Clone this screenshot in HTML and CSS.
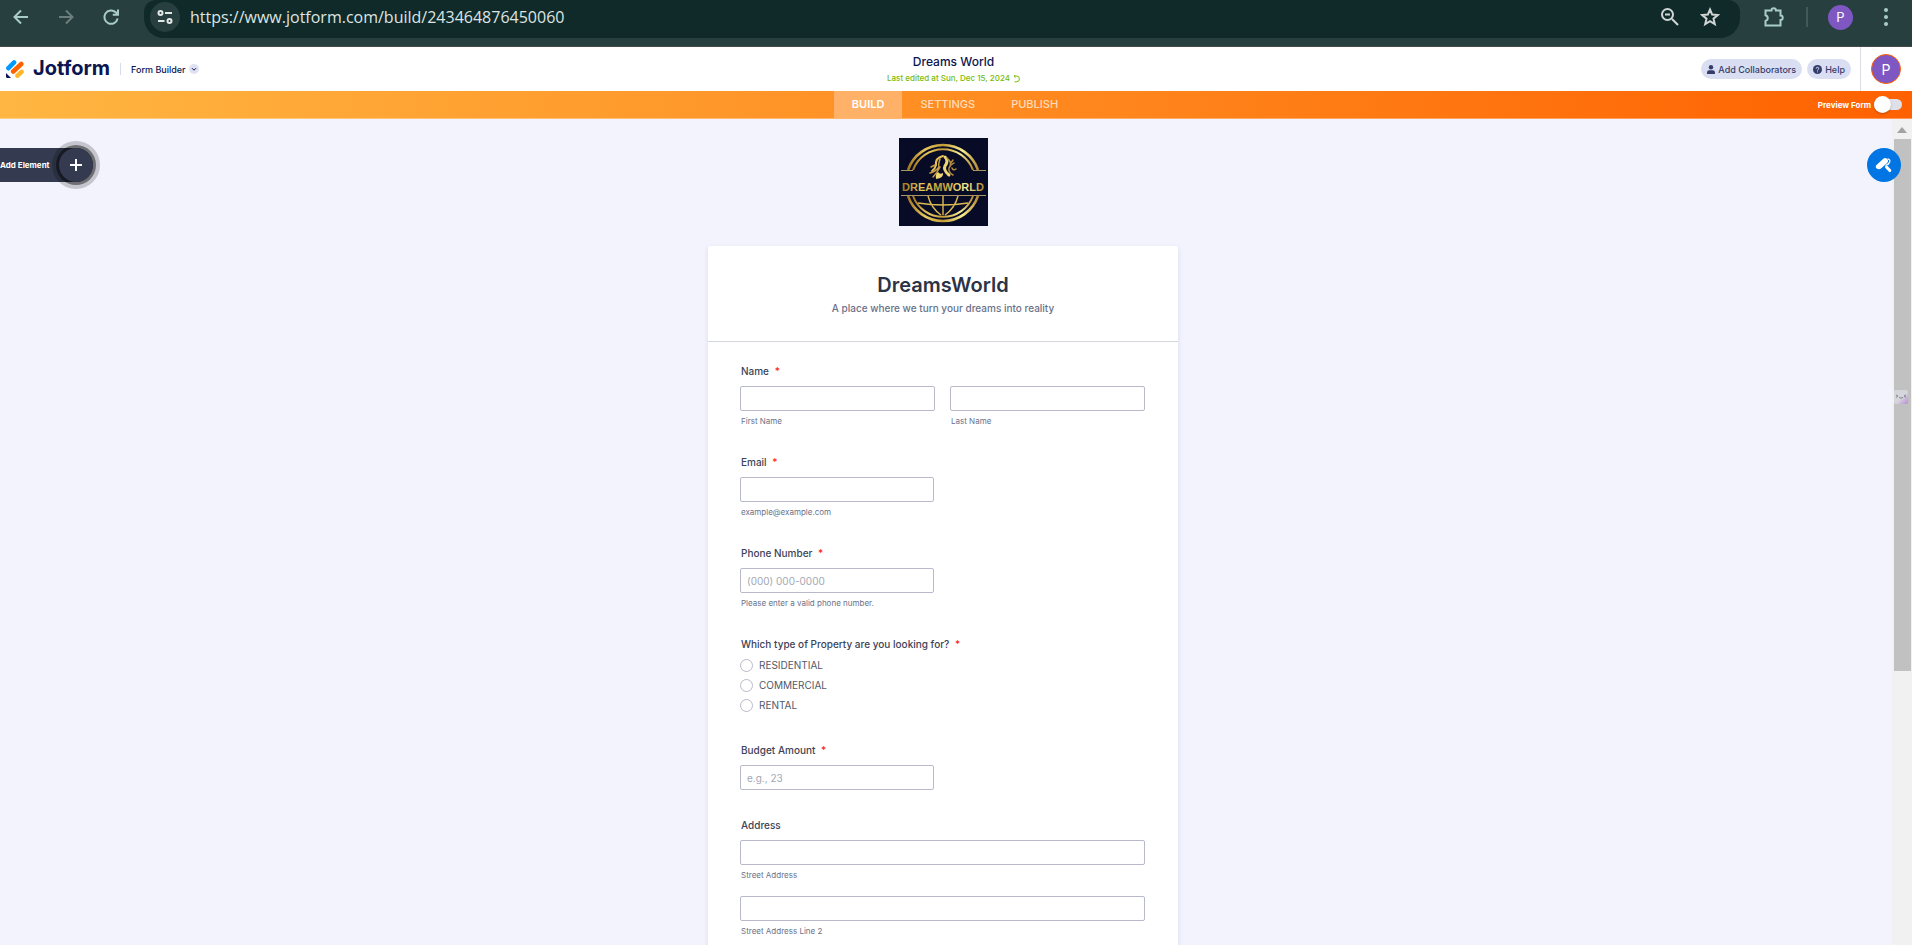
FILE: index.html
```html
<!DOCTYPE html>
<html lang="en">
<head>
<meta charset="utf-8">
<title>Dreams World - Form Builder</title>
<link rel="stylesheet" href="styles.css">
</head>
<body>
<div class="browser">
  <div class="browser-nav">
    <button class="tool" aria-label="Back"><svg width="18" height="18" viewBox="0 0 18 18"><path d="M16 9H3M9 2.500 2.500 9 9 15.500"/></svg></button>
    <button class="tool tool-off" aria-label="Forward"><svg width="18" height="18" viewBox="0 0 18 18"><path d="M2 9h13M9 2.500 15.500 9 9 15.500"/></svg></button>
    <button class="tool" aria-label="Reload"><svg width="18" height="18" viewBox="0 0 18 18"><path d="M15.600 10.500A6.700 6.700 0 1 1 13.700 4.300L15.500 6M16 1.500V6.700H10.800"/></svg></button>
  </div>
  <div class="omnibox">
    <button class="site-info" aria-label="Site information"><svg width="16" height="16" viewBox="0 0 16 16"><circle cx="3.500" cy="4" r="2"/><path d="M8 4h7M1 12h6.500"/><circle cx="12.500" cy="12" r="2"/></svg></button>
    <input class="url" type="text" aria-label="Address bar" value="https://www.jotform.com/build/243464876450060">
    <button class="tool" aria-label="Zoom"><svg width="20" height="20" viewBox="0 0 20 20"><circle cx="7.500" cy="7.500" r="5.500"/><path d="M12 12l6 6M5 7.500h5"/></svg></button>
    <button class="tool" aria-label="Bookmark"><svg width="20" height="20" viewBox="0 0 20 20"><path d="M10 2.500l2.200 5.100 5.500.5-4.200 3.600 1.300 5.400L10 14.200l-4.800 2.900 1.300-5.400L2.300 8.100l5.500-.5z"/></svg></button>
  </div>
  <div class="browser-end">
    <button class="tool tool-soft" aria-label="Extensions"><svg width="22" height="22" viewBox="0 0 22 22"><path d="M2.500 4.500H8.500a2.200 2.200 0 0 1 4.400 0H17.500V9.500a2.200 2.200 0 0 1 0 4.400V19.500H2.500V15a3 3 0 0 0 0-5.800z"/></svg></button>
    <span class="browser-rule"></span>
    <button class="profile" aria-label="Profile">P</button>
    <button class="tool tool-soft" aria-label="Menu"><svg width="6" height="20" viewBox="0 0 6 20"><g class="solid"><circle cx="3" cy="3" r="2"/><circle cx="3" cy="10" r="2"/><circle cx="3" cy="17" r="2"/></g></svg></button>
  </div>
</div>

<header class="header">
  <div class="header-left">
    <a class="brand" href="#">
      <svg width="18" height="18" viewBox="0 0 18 18" aria-hidden="true"><g fill="none" stroke-width="4.600" stroke-linecap="round"><path stroke="#0099ff" d="M2.400 8.200 8 2.500"/><path stroke="#ff6100" d="M7.200 11.500 15.300 4"/><path stroke="#ffb629" d="M11.500 15.600l4-3.700"/></g><path fill="#0a1551" d="M0 13v3.800c0 .7.500 1.200 1.200 1.200H5z"/></svg>
      <span class="brand-name">Jotform</span>
    </a>
    <button class="product">Form Builder <span class="chev"><svg width="10" height="10" viewBox="0 0 10 10"><path d="M3 4.200l2 2 2-2"/></svg></span></button>
  </div>
  <div class="header-mid">
    <h1 class="doc-title">Dreams World</h1>
    <a class="edited" href="#">Last edited at Sun, Dec 15, 2024 <svg width="7" height="8" viewBox="0 0 7 8"><path d="M1 1h2.500a2.700 2.700 0 0 1 0 5.800H1.500M2.500 0 1 1.300l1.500 1.400"/></svg></a>
  </div>
  <div class="header-right">
    <button class="pill"><svg width="8" height="9" viewBox="0 0 8 9"><circle cx="4" cy="2.200" r="2.200"/><path d="M0 9V7.500Q0 5.200 2.300 5.200H5.700Q8 5.200 8 7.500V9z"/></svg>Add Collaborators</button>
    <button class="pill"><svg width="9" height="9" viewBox="0 0 9 9"><circle cx="4.500" cy="4.500" r="4.500"/><path class="mark" d="M3.200 3.600a1.300 1.300 0 1 1 1.900 1.100q-.6.300-.6.800M4.500 6.500v.8"/></svg>Help</button>
    <div class="account"><button class="avatar" aria-label="Account">P</button></div>
  </div>
</header>

<nav class="nav">
  <div class="tabs">
    <a class="tab tab-on" href="#">BUILD</a>
    <a class="tab" href="#">SETTINGS</a>
    <a class="tab" href="#">PUBLISH</a>
  </div>
  <label class="preview">Preview Form <input class="switch" type="checkbox"></label>
</nav>

<div class="workspace">
  <button class="add-element">Add Element <span class="plus"><svg width="12" height="12" viewBox="0 0 12 12"><path d="M6 0v12M0 6h12"/></svg></span></button>
  <main class="stage">
    <svg class="logo" width="89" height="88" viewBox="0 0 89 88" role="img" aria-label="Dreamworld">
      <defs>
        <linearGradient id="gold" x1="0" y1="0" x2="1" y2="0"><stop offset="0" stop-color="#a8771f"/><stop offset=".25" stop-color="#e6c860"/><stop offset=".5" stop-color="#c49a35"/><stop offset=".78" stop-color="#f6ee92"/><stop offset="1" stop-color="#b48a34"/></linearGradient>
      </defs>
      <rect width="89" height="88" fill="#080b25"/>
      <g fill="none" stroke="#dbb950">
        <path stroke="url(#gold)" stroke-width="2.500" d="M9 32A37 37 0 0 1 79 32M9 58A37 37 0 0 0 79 58"/>
        <path stroke="url(#gold)" stroke-width="2" d="M14 32A32 32 0 0 1 74 32M14 58A32 32 0 0 0 74 58"/>
        <path stroke="#a89663" stroke-width="1" d="M2 32.500H14M74 32.500H87M2 57.500H87"/>
        <path stroke-width="1.400" d="M44 58V77M29 58Q32 70 42 77M59 58Q56 70 46 77M19 65Q44 69 69 65"/>
      </g>
      <g fill="none" stroke-linecap="round">
        <path stroke="#e3c05a" stroke-width="2" d="M44 18Q36 20 37 27Q36 31 33 33"/>
        <path stroke="#c79d45" stroke-width="1.500" d="M41 21Q39 27 40 29Q36 34 31 35M41 29Q38 35 34 39M36 27L32 29"/>
        <path stroke="#efd675" stroke-width="3" d="M46 19Q50 23 46 28Q44 32 50 37"/>
        <path stroke="#b58b3c" stroke-width="1.500" d="M48 20Q54 25 50 30Q49 34 54 37M53 30Q54 33 57 31M50 22l2 3 2-3M52 27l3-2"/>
      </g>
      <path fill="#efd675" d="M37 41Q36 36 39 34Q41 37 44 35Q45 40 37 41Z"/>
      <text class="logo-text" x="44" y="53" text-anchor="middle" fill="url(#gold)">DREAMWORLD</text>
    </svg>
    <form class="card">
      <div class="card-head">
        <h2 class="form-title">DreamsWorld</h2>
        <p class="form-sub">A place where we turn your dreams into reality</p>
      </div>
      <div class="fields">
        <fieldset class="field">
          <legend class="label">Name <span class="req">*</span></legend>
          <div class="pair">
            <div><input class="box" id="first" type="text"><label class="hint" for="first">First Name</label></div>
            <div><input class="box" id="last" type="text"><label class="hint" for="last">Last Name</label></div>
          </div>
        </fieldset>
        <div class="field">
          <label class="label" for="email">Email <span class="req">*</span></label>
          <input class="box box-half" id="email" type="email" aria-describedby="email-hint">
          <span class="hint" id="email-hint">example@example.com</span>
        </div>
        <div class="field">
          <label class="label" for="phone">Phone Number <span class="req">*</span></label>
          <input class="box box-half" id="phone" type="tel" placeholder="(000) 000-0000" aria-describedby="phone-hint">
          <span class="hint" id="phone-hint">Please enter a valid phone number.</span>
        </div>
        <fieldset class="field">
          <legend class="label label-tight">Which type of Property are you looking for? <span class="req">*</span></legend>
          <label class="option"><input class="radio" type="radio" name="property">RESIDENTIAL</label>
          <label class="option"><input class="radio" type="radio" name="property">COMMERCIAL</label>
          <label class="option"><input class="radio" type="radio" name="property">RENTAL</label>
        </fieldset>
        <div class="field">
          <label class="label" for="budget">Budget Amount <span class="req">*</span></label>
          <input class="box box-half" id="budget" type="text" placeholder="e.g., 23">
        </div>
        <fieldset class="field">
          <legend class="label">Address</legend>
          <div class="stack">
            <div><input class="box" id="street" type="text"><label class="hint" for="street">Street Address</label></div>
            <div><input class="box" id="street2" type="text"><label class="hint" for="street2">Street Address Line 2</label></div>
          </div>
        </fieldset>
      </div>
    </form>
  </main>
  <div class="scrollbar" aria-hidden="true">
    <svg class="scroll-up" width="10" height="6" viewBox="0 0 10 6"><path d="M0 6 5 0l5 6z"/></svg>
    <div class="thumb"></div>
  </div>
  <button class="designer" aria-label="Form designer"><svg width="18" height="18" viewBox="0 0 18 18"><path fill="#fff" d="M1 9.500 8 3q2-2 4-.2t.4 3.900L6 12.500q-2 1.400-4 .3T1 9.500z"/><path fill="none" stroke="#fff" stroke-width="1.300" d="M12.500 2.800q3 .7 2.200 3.200T10.500 9.500"/><path fill="none" stroke="#fff" stroke-width="3" stroke-linecap="round" d="M11.500 11l3.300 3.600"/></svg></button>
  <button class="helper" aria-label="Assistant"><svg width="14" height="14" viewBox="0 0 14 14"><path d="M2 5l2 1-2 1.500M12 5l-2 1 2 1.500M5 7.500q2 1.200 4 0"/></svg></button>
</div>
</body>
</html>
```

FILE: styles.css
```css
* { box-sizing: border-box; }
body {
  margin: 0;
  height: 100vh;
  display: flex;
  flex-direction: column;
  overflow: hidden;
  font-family: Inter, "Liberation Sans", sans-serif;
  color: #2c3345;
  background: #f3f3fe;
}
button, input { font: inherit; color: inherit; }
button { border: 0; padding: 0; background: none; }
a { color: inherit; text-decoration: none; }
svg { display: block; flex: none; }
h1, h2, p { margin: 0; }
fieldset { border: 0; margin: 0; padding: 0; min-width: 0; }

/* Browser toolbar */
.browser {
  flex: none;
  height: 47px;
  display: flex;
  align-items: flex-start;
  background: #27403f;
  border-bottom: 1px solid #454b4a;
}
.browser-nav { display: flex; gap: 27px; padding: 8px 24px 0 12px; }
.tool { color: #d0d6d5; }
.tool svg { fill: none; stroke: currentColor; stroke-width: 2; }
.tool .solid { fill: currentColor; stroke: none; }
.browser-nav .tool, .tool-soft { color: #a9cbca; }
.browser-nav .tool-off { color: #6c7d7c; }
.omnibox {
  flex: 1;
  height: 38px;
  display: flex;
  align-items: center;
  gap: 20px;
  padding: 0 20px 4px 6px;
  background: #102a29;
  border-radius: 12px 12px 20px 20px;
}
.site-info {
  width: 30px;
  height: 30px;
  display: grid;
  place-items: center;
  border-radius: 50%;
  background: #27403f;
  color: #e3e8e7;
}
.site-info svg { fill: none; stroke: currentColor; stroke-width: 2; }
.url {
  flex: 1;
  min-width: 0;
  margin-left: -10px;
  padding: 0;
  border: 0;
  background: none;
  color: #dde4e3;
  font-family: "Open Sans", "Noto Sans", sans-serif;
  font-size: 16px;
}
.browser-end { display: flex; align-items: center; height: 34px; padding: 0 23px 0 23px; }
.browser-rule { width: 2px; height: 20px; margin: 0 20px 0 21px; background: #415a59; }
.profile { width: 25px; height: 25px; margin-right: 30px; border-radius: 50%; background: #7e57c2; color: #fff; font-size: 13px; }

/* App header */
.header {
  flex: none;
  height: 44px;
  display: grid;
  grid-template-columns: 1fr auto 1fr;
  align-items: center;
  background: #fff;
  color: #0a1551;
}
.header-left { display: flex; align-items: center; padding-left: 6px; }
.brand { display: flex; align-items: center; gap: 9px; }
.brand-name { font-size: 20px; font-weight: 700; line-height: 22px; padding-bottom: 2px; }
.product {
  display: flex;
  align-items: center;
  gap: 3px;
  height: 12px;
  margin-left: 10px;
  padding-left: 10px;
  border-left: 1px solid #d8daee;
  font-size: 9px;
  font-weight: 500;
}
.chev { border-radius: 50%; background: #dfe2f3; }
.chev svg { fill: none; stroke: #0a1551; }
.header-mid { display: flex; flex-direction: column; align-items: center; gap: 3px; padding-right: 5px; }
.doc-title { font-size: 12px; font-weight: 500; line-height: 16px; }
.edited { display: flex; align-items: center; gap: 3px; font-size: 8px; font-weight: 500; line-height: 11px; color: #78bb07; }
.edited svg { fill: none; stroke: currentColor; }
.header-right { display: flex; justify-content: flex-end; align-items: center; align-self: stretch; gap: 5px; }
.pill {
  display: flex;
  align-items: center;
  gap: 3px;
  height: 20px;
  padding: 0 6px;
  border-radius: 10px;
  background: #dadef3;
  color: #343c6a;
  font-size: 9px;
  font-weight: 500;
}
.pill svg { fill: currentColor; }
.pill .mark { fill: none; stroke: #dadef3; }
.account { display: flex; align-items: center; align-self: stretch; margin-left: 4px; padding: 0 11px 0 10px; border-left: 1px solid #dcdde3; }
.avatar { width: 30px; height: 30px; border: 1px solid #ff6100; border-radius: 50%; background: #7e57c2; color: #fff; font-size: 14px; }

/* Builder tabs */
.nav {
  flex: none;
  height: 28px;
  display: grid;
  grid-template-columns: 1fr auto 1fr;
  background: linear-gradient(90deg, #ffb642, #ff8d22 50%, #ff6100);
  border-bottom: 1px solid #ffffff55;
  color: #fff;
}
.tabs { grid-column: 2; display: flex; padding-right: 2px; }
.tab { display: flex; align-items: center; padding: 0 18px 2px; font-size: 11px; font-weight: 500; color: #ffdcb8; }
.tab-on { background: #ffb168; color: #fff; font-weight: 600; }
.preview { display: flex; justify-content: flex-end; align-items: center; gap: 3px; padding-right: 10px; font-size: 8px; font-weight: 700; }
.switch { appearance: none; position: relative; width: 28px; height: 11px; margin: 0; border-radius: 6px; background: #dfe0e8; }
.switch::before { content: ""; position: absolute; left: 0; top: -3px; width: 17px; height: 17px; border-radius: 50%; background: #fff; box-shadow: 0 1px 2px #0004; }

/* Workspace */
.workspace { flex: 1; min-height: 0; position: relative; display: flex; }
.stage { flex: 1; min-width: 0; overflow: hidden; display: flex; flex-direction: column; align-items: center; padding-top: 19px; padding-right: 6px; }
.logo { margin-bottom: 20px; }
.logo-text { font-family: "Liberation Sans", sans-serif; font-size: 11px; font-weight: 700; }
.card { width: 100%; max-width: 470px; flex: none; background: #fff; border-radius: 2px; box-shadow: 0 2px 5px #54547d26; }
.card-head { padding: 24px 32px; border-bottom: 1px solid #d5d6e0; text-align: center; }
.form-title { font-size: 20px; font-weight: 600; line-height: 30px; }
.form-sub { font-size: 10px; font-weight: 500; line-height: 17px; color: #6a718a; }
.fields { display: flex; flex-direction: column; gap: 28px; padding: 22px 33px 40px 32px; }
.label { display: block; margin-bottom: 8px; padding: 0 0 0 1px; font-size: 10px; font-weight: 500; line-height: 14px; color: #3d4357; }
.label-tight { margin-bottom: 4px; }
.req { margin-left: 3px; color: #ff1d1d; }
.box { display: block; width: 100%; height: 25px; padding: 0 6px; border: 1px solid #b8bacb; border-radius: 2px; background: #fff; font-size: 10px; }
.box-half { width: 48%; }
.box::placeholder { color: #a3a8b4; opacity: 1; }
.hint { display: block; margin-top: 4px; padding-left: 1px; font-size: 8px; line-height: 12px; color: #69728a; }
.pair { display: grid; grid-template-columns: 1fr 1fr; gap: 15px; }
.stack { display: grid; gap: 15px; }
.option { display: flex; align-items: center; gap: 6px; height: 20px; font-size: 10px; line-height: 16px; color: #535968; }
.radio { appearance: none; width: 13px; height: 13px; margin: 0; border: 1px solid #b8bacb; border-radius: 50%; background: #fff; }

/* Floating controls */
.add-element {
  position: absolute;
  left: 0;
  top: 29px;
  height: 34px;
  display: flex;
  align-items: center;
  gap: 9px;
  border-radius: 0 17px 17px 0;
  background: #343a4f;
  color: #fff;
  font-size: 8px;
  font-weight: 700;
}
.plus { width: 34px; height: 34px; display: grid; place-items: center; border-radius: 50%; background: #343a4f; box-shadow: 0 0 0 3px #00000070, 0 0 0 7px #00000030; }
.plus svg { fill: none; stroke: #fff; stroke-width: 2; }
.designer { position: absolute; right: 11px; top: 29px; width: 34px; height: 34px; display: grid; place-items: center; border-radius: 50%; background: #0075e3; }
.helper { position: absolute; right: 4px; top: 271px; border-radius: 2px; background: linear-gradient(135deg, #d5d6dc 55%, #b98ad8); }
.helper svg { fill: none; stroke: #85858f; }
.scrollbar { flex: none; width: 20px; display: flex; flex-direction: column; align-items: center; padding-top: 8px; background: #f1f1f1; }
.scroll-up { fill: #a3a3a3; }
.thumb { width: 17px; height: 65%; margin-top: 6px; background: #c1c1c1; }
```
